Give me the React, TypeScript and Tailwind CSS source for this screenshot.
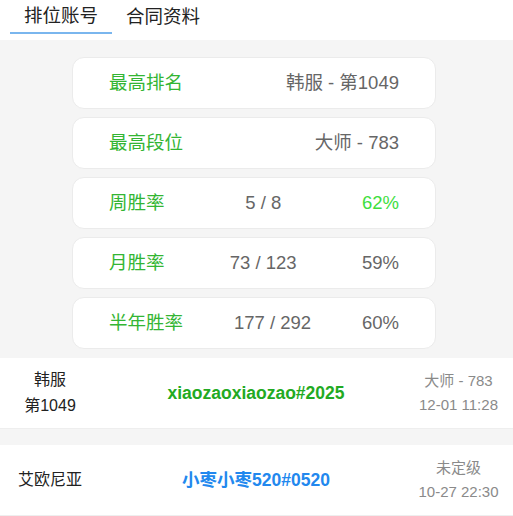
const font = { fontFamily: '"Liberation Sans", "Noto Sans CJK SC", sans-serif' };

type Stat = { label: string; mid?: string; value: string; hot?: boolean };

const stats: Stat[] = [
  { label: "最高排名", value: "韩服 - 第1049" },
  { label: "最高段位", value: "大师 - 783" },
  { label: "周胜率", mid: "5 / 8", value: "62%", hot: true },
  { label: "月胜率", mid: "73 / 123", value: "59%" },
  { label: "半年胜率", mid: "177 / 292", value: "60%" },
];

type Account = { server: string[]; name: string; blue?: boolean; tier: string; time: string };

const accounts: Account[] = [
  { server: ["韩服", "第1049"], name: "xiaozaoxiaozao#2025", tier: "大师 - 783", time: "12-01 11:28" },
  { server: ["艾欧尼亚"], name: "小枣小枣520#0520", blue: true, tier: "未定级", time: "10-27 22:30" },
];

function StatCard({ s }: { s: Stat }) {
  return (
    <div className="flex h-[52px] items-center justify-between rounded-[12px] border border-[#ebebeb] bg-white px-[36px] text-[18.5px] leading-[24px]">
      <span className="text-[#33b533]">{s.label}</span>
      {s.mid && <span className="text-[#666]">{s.mid}</span>}
      <span className={s.hot ? "text-[#3ede3e]" : "text-[#666]"}>{s.value}</span>
    </div>
  );
}

function AccountRow({ a }: { a: Account }) {
  return (
    <div className="flex h-[71px] items-center border-b border-[#eeeeee] bg-white">
      <div className="flex w-[100px] flex-col items-center text-[16px] leading-[26px] text-[#222]">
        {a.server.map((t) => (
          <span key={t}>{t}</span>
        ))}
      </div>
      <div
        className={`w-[312px] text-center text-[17.5px] font-bold leading-[24px] ${
          a.blue ? "text-[#2288ee]" : "text-[#22aa22]"
        }`}
      >
        {a.name}
      </div>
      <div className="flex flex-1 flex-col items-center pr-2 text-[15px] leading-[24px] text-[#8a8a8a]">
        <span>{a.tier}</span>
        <span>{a.time}</span>
      </div>
    </div>
  );
}

export default function App() {
  return (
    <div className="h-[516px] w-[513px] overflow-hidden bg-[#f5f5f5]" style={font}>
      <div className="flex h-[40px] bg-white pl-[10px] text-[18.5px] text-[#222]">
        <div className="flex h-[34px] w-[102px] items-center justify-center border-b-2 border-[#7ab6ee]">
          排位账号
        </div>
        <div className="flex h-[34px] w-[102px] items-center justify-center">合同资料</div>
      </div>
      <div className="ml-[72px] flex w-[364px] flex-col gap-[8px] pt-[17px] pb-[9px]">
        {stats.map((s) => (
          <StatCard key={s.label} s={s} />
        ))}
      </div>
      <div className="flex flex-col gap-[16px]">
        {accounts.map((a) => (
          <AccountRow key={a.name} a={a} />
        ))}
      </div>
    </div>
  );
}
